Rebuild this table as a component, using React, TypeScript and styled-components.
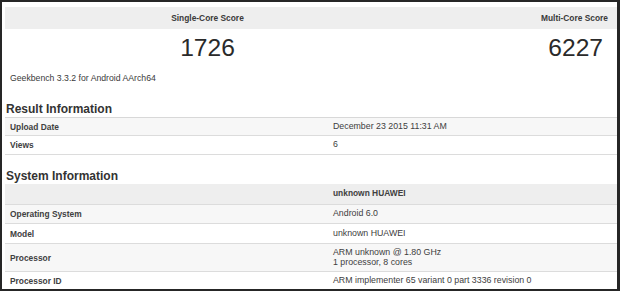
import styled, { createGlobalStyle } from "styled-components"

const GlobalStyle = createGlobalStyle`
  html, body {
    margin: 0;
    padding: 0;
    background: #fff;
  }
  * {
    box-sizing: border-box;
  }
`

const Frame = styled.div`
  width: 620px;
  height: 291px;
  overflow: hidden;
  border: 2px solid #262626;
  border-right-width: 3px;
  background: #fff;
  padding: 5px 0 0 3px;
  font-family: "Liberation Sans", Arial, sans-serif;
  color: #333;
`

const ScoreGrid = styled.div<{ $head?: boolean }>`
  display: grid;
  grid-template-columns: 405px 1fr;
  align-items: center;
  height: ${(p) => (p.$head ? "22px" : "38px")};
  background: ${(p) => (p.$head ? "#eeeeee" : "transparent")};
`

const ScoreLabel = styled.div<{ $right?: boolean }>`
  font-size: 8.4px;
  font-weight: 700;
  color: #3a3a3a;
  text-align: ${(p) => (p.$right ? "right" : "center")};
  padding-right: ${(p) => (p.$right ? "9px" : "0")};
`

const ScoreValue = styled.div<{ $right?: boolean }>`
  font-size: 24.6px;
  line-height: 38px;
  color: #2a2a2a;
  text-align: ${(p) => (p.$right ? "right" : "center")};
  padding-right: ${(p) => (p.$right ? "14px" : "0")};
`

const Version = styled.div`
  height: 22px;
  line-height: 23px;
  padding-left: 5px;
  font-size: 8.7px;
  color: #3a3a3a;
`

const SectionTitle = styled.h2<{ $h: number }>`
  margin: 0;
  height: ${(p) => p.$h}px;
  display: flex;
  align-items: flex-end;
  padding: 0 0 1px 1px;
  font-size: 12px;
  line-height: 14px;
  font-weight: 700;
  color: #333;
`

const Table = styled.div`
  border-top: 1px solid #d8d8d8;
`

const Row = styled.div<{ $h: number; $tone: "head" | "odd" | "even" }>`
  display: grid;
  grid-template-columns: 323px 1fr;
  align-items: center;
  height: ${(p) => p.$h}px;
  border-bottom: 1px solid #dcdcdc;
  background: ${(p) =>
    p.$tone === "head" ? "#eeeeee" : p.$tone === "odd" ? "#f7f7f7" : "#fff"};
`

const Label = styled.div`
  padding-left: 5px;
  font-size: 8.4px;
  font-weight: 700;
  color: #404040;
`

const Value = styled.div<{ $bold?: boolean }>`
  padding-left: 5px;
  font-size: ${(p) => (p.$bold ? "8.4px" : "8.8px")};
  font-weight: ${(p) => (p.$bold ? 700 : 400)};
  line-height: 9.5px;
  color: #404040;
`

type InfoRow = { label: string; value: string[]; h: number }

const resultRows: InfoRow[] = [
  { label: "Upload Date", value: ["December 23 2015 11:31 AM"], h: 18 },
  { label: "Views", value: ["6"], h: 19 },
]

const systemRows: InfoRow[] = [
  { label: "Operating System", value: ["Android 6.0"], h: 19 },
  { label: "Model", value: ["unknown HUAWEI"], h: 20 },
  {
    label: "Processor",
    value: ["ARM unknown @ 1.80 GHz", "1 processor, 8 cores"],
    h: 28,
  },
  {
    label: "Processor ID",
    value: ["ARM implementer 65 variant 0 part 3336 revision 0"],
    h: 18,
  },
]

function InfoRows({ rows }: { rows: InfoRow[] }) {
  return (
    <>
      {rows.map((row, i) => (
        <Row key={row.label} $h={row.h} $tone={i % 2 === 0 ? "odd" : "even"}>
          <Label>{row.label}</Label>
          <Value>
            {row.value.map((line) => (
              <div key={line}>{line}</div>
            ))}
          </Value>
        </Row>
      ))}
    </>
  )
}

export default function App() {
  return (
    <>
      <GlobalStyle />
      <Frame>
        <ScoreGrid $head>
          <ScoreLabel>Single-Core Score</ScoreLabel>
          <ScoreLabel $right>Multi-Core Score</ScoreLabel>
        </ScoreGrid>
        <ScoreGrid>
          <ScoreValue>1726</ScoreValue>
          <ScoreValue $right>6227</ScoreValue>
        </ScoreGrid>
        <Version>Geekbench 3.3.2 for Android AArch64</Version>

        <SectionTitle $h={28}>Result Information</SectionTitle>
        <Table>
          <InfoRows rows={resultRows} />
        </Table>

        <SectionTitle $h={29}>System Information</SectionTitle>
        <Row $h={21} $tone="head">
          <Label />
          <Value $bold>unknown HUAWEI</Value>
        </Row>
        <InfoRows rows={systemRows} />
      </Frame>
    </>
  )
}
